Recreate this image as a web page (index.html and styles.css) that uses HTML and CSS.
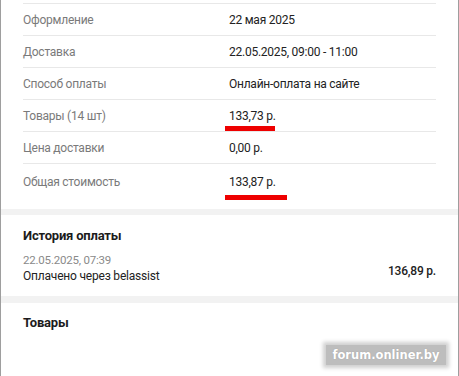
FILE: index.html
```html
<!DOCTYPE html>
<html lang="ru">
<head>
<meta charset="utf-8">
<link rel="stylesheet" href="styles.css">
</head>
<body>
<div class="frame">
  <div class="section details">
    <div class="row"><span class="label">Оформление</span><span class="value">22 мая 2025</span></div>
    <div class="row"><span class="label">Доставка</span><span class="value">22.05.2025, 09:00 - 11:00</span></div>
    <div class="row"><span class="label">Способ оплаты</span><span class="value">Онлайн-оплата на сайте</span></div>
    <div class="row"><span class="label">Товары (14 шт)</span><span class="value"><span class="mark mark-short">133,73 р.</span></span></div>
    <div class="row"><span class="label">Цена доставки</span><span class="value">0,00 р.</span></div>
    <div class="row last"><span class="label">Общая стоимость</span><span class="value"><span class="mark mark-long">133,87 р.</span></span></div>
  </div>
  <div class="band"></div>
  <div class="section history">
    <h2 class="title">История оплаты</h2>
    <div class="pay">
      <div class="pay-info">
        <div class="pay-date">22.05.2025, 07:39</div>
        <div class="pay-method">Оплачено через belassist</div>
      </div>
      <div class="pay-sum">136,89 р.</div>
    </div>
  </div>
  <div class="band band-b"></div>
  <div class="section goods">
    <h2 class="title">Товары</h2>
  </div>
  <div class="watermark">forum.onliner.by</div>
</div>
</body>
</html>
```
FILE: styles.css
```css
* { box-sizing: border-box; }
html, body { margin: 0; padding: 0; background: #fff; }
body { font-family: Roboto, "Noto Sans", sans-serif; color: #222; }
.frame {
  position: relative;
  height: 376px;
  overflow: hidden;
  border-left: 1px solid #9e9e9e;
  border-right: 1px solid #9e9e9e;
}
.section { padding: 0 22px; }
.details { padding-top: 3px; padding-bottom: 10px; }
.row {
  display: grid;
  grid-template-columns: 206px 1fr;
  align-items: center;
  height: 32px;
  border-top: 1px solid #e8e8e8;
  font-size: 12px;
  letter-spacing: -0.25px;
}
.row.last { height: 36px; }
.label { color: #7a7a7a; }
.value { color: #222; }
.mark { position: relative; }
.mark::after {
  content: "";
  position: absolute;
  left: -4px;
  top: 18px;
  height: 5px;
  background: #ee0000;
}
.mark-short::after { width: 50px; top: 17px; }
.mark-long::after { width: 62px; top: 20px; }
.band { height: 6px; background: #f2f2f2; }
.band-b { height: 7px; }
.title {
  margin: 0;
  font-size: 13px;
  font-weight: 700;
  letter-spacing: -0.2px;
  color: #1c1c1c;
}
.history { padding-top: 13px; padding-bottom: 12px; }
.pay {
  display: flex;
  justify-content: space-between;
  align-items: center;
  margin-top: 10px;
  letter-spacing: -0.2px;
}
.pay-date { font-size: 11.5px; color: #8a8a8a; line-height: 15px; }
.pay-method { font-size: 12px; color: #222; line-height: 16px; }
.pay-sum { font-size: 12px; font-weight: 500; color: #222; padding-top: 4px; }
.goods { padding-top: 12px; }
.watermark {
  position: absolute;
  left: 325px;
  top: 345px;
  width: 120px;
  height: 20px;
  font-family: "DejaVu Sans", sans-serif;
  font-weight: 700;
  font-size: 11.5px;
  color: #fff;
  text-align: center;
  line-height: 20px;
  background: #bdbdbd;
  box-shadow: 0 0 4px 3px #cfcfcf;
  text-shadow: 0 0 1px #999;
}
```
